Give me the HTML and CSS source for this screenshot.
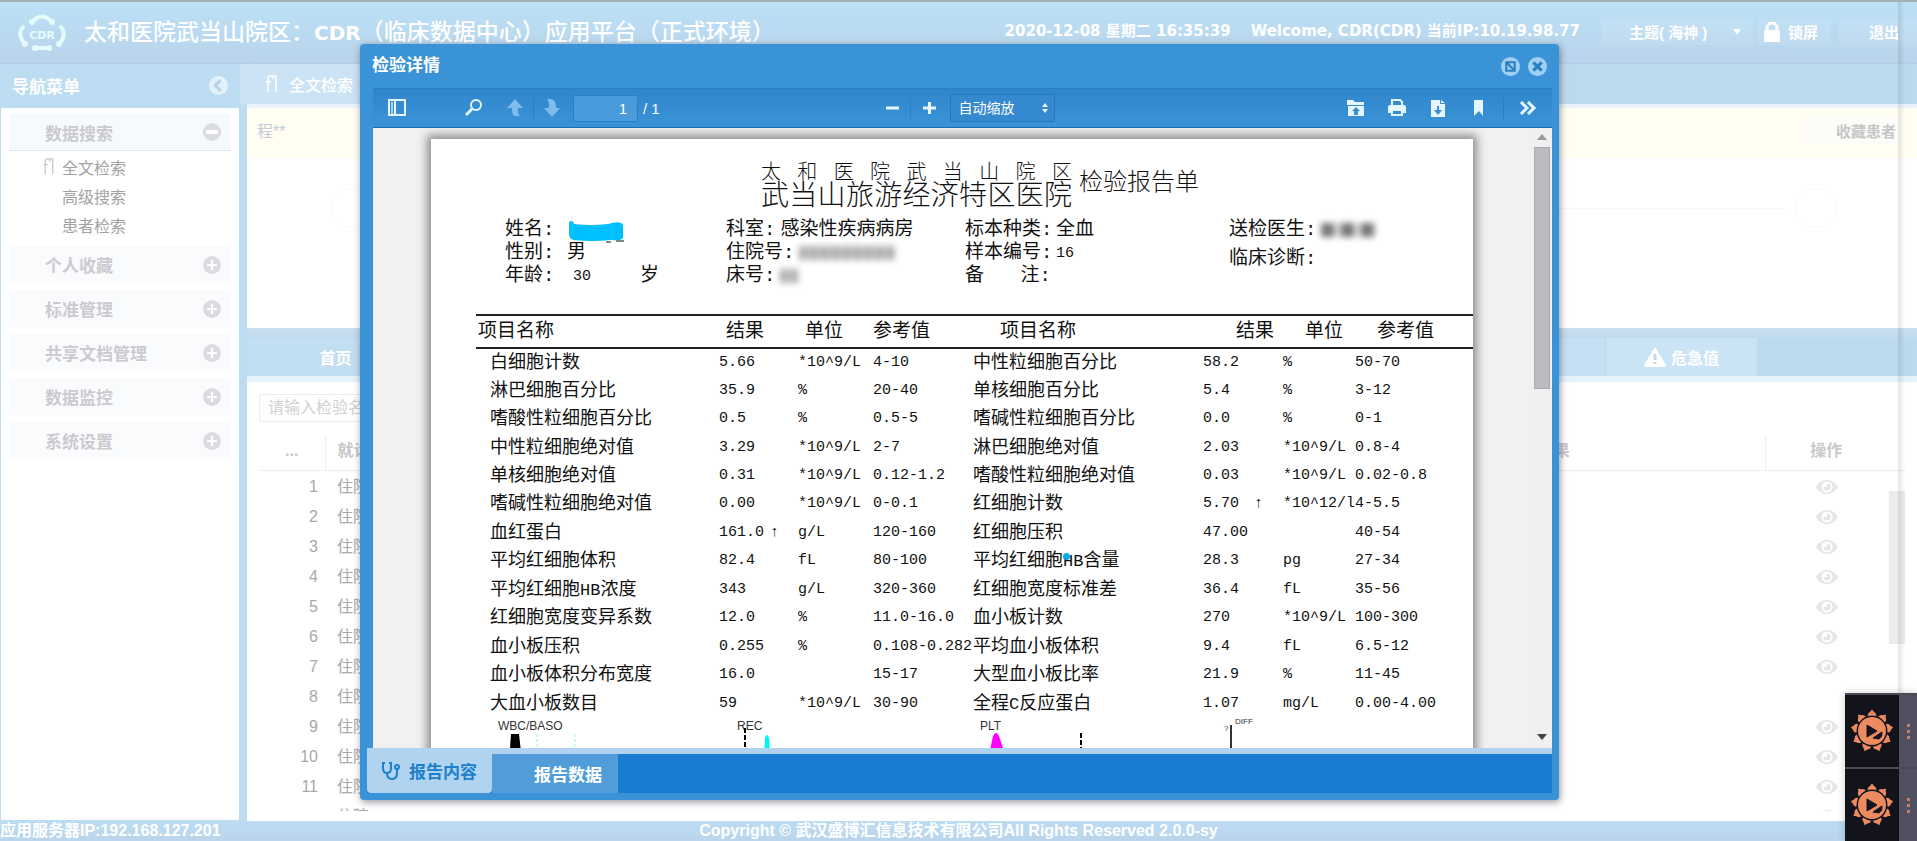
FILE: index.html
```html
<!DOCTYPE html>
<html lang="zh-CN">
<head>
<meta charset="utf-8">
<title>CDR 应用平台</title>
<link rel="stylesheet" href="styles.css">
</head>
<body>
<svg class="defs" aria-hidden="true">
  <symbol id="eye" viewBox="0 0 22 16"><path fill="currentColor" fill-rule="evenodd" d="M0 8C3 3 7 1 11 1s8 2 11 7c-3 5-7 7-11 7S3 13 0 8zm11-5.500a5.500 5.500 0 1 0 0 11 5.500 5.500 0 0 0 0-11z"/><path fill="currentColor" d="M11 4.500A3.500 3.500 0 1 1 7.500 8H11z"/></symbol>
  <symbol id="plus" viewBox="0 0 18 18"><circle cx="9" cy="9" r="9" fill="currentColor"/><path d="M9 4v10M4 9h10" stroke="#fff" stroke-width="2"/></symbol>
  <symbol id="minus" viewBox="0 0 18 18"><circle cx="9" cy="9" r="9" fill="currentColor"/><path d="M3 9h12" stroke="#fff" stroke-width="4"/></symbol>
  <symbol id="doc" viewBox="0 0 12 18"><path d="M3 17V5c0-2 1-4 3-4s2 1 2 3M1 7h5M6 1h5v16" fill="none" stroke="currentColor" stroke-width="1.500"/></symbol>
  <symbol id="flower" viewBox="0 0 44 44">
    <g fill="#ec8a60"><path id="petal" d="M17.500 7Q17.500 4 20 3l2-2.500L24 3q2.500 1 2.500 4-4.500-1-9 0z"/>
    <use href="#petal" transform="rotate(40 22 22)"/><use href="#petal" transform="rotate(80 22 22)"/><use href="#petal" transform="rotate(120 22 22)"/><use href="#petal" transform="rotate(160 22 22)"/><use href="#petal" transform="rotate(200 22 22)"/><use href="#petal" transform="rotate(240 22 22)"/><use href="#petal" transform="rotate(280 22 22)"/><use href="#petal" transform="rotate(320 22 22)"/>
    <circle cx="22" cy="22" r="14"/></g>
    <path d="M17 16l10 6-10 6zM23 29l9-6c0 3 0 5-3 7z" fill="#14141e" stroke="#14141e" stroke-linejoin="round"/>
  </symbol>
</svg>

<header class="top">
  <svg class="logo" viewBox="0 0 48 38"><g fill="none" stroke="#e4fbfb" stroke-width="4" stroke-linecap="round"><path d="M14 8Q24-3 34 8"/><path d="M5 13Q-1 20 6 29"/><path d="M43 13Q49 20 42 29"/><path d="M16 34h16"/></g><g fill="#e4fbfb"><circle cx="14" cy="8" r="3"/><circle cx="34" cy="8" r="3"/><circle cx="7" cy="30" r="3"/><circle cx="41" cy="30" r="3"/><circle cx="17" cy="34" r="3"/><circle cx="31" cy="34" r="3"/></g><text x="24" y="25" text-anchor="middle" class="logo-text">CDR</text></svg>
  <h1>太和医院武当山院区：<b>CDR</b>（临床数据中心）应用平台（正式环境）</h1>
  <div class="status"><span>2020-12-08 星期二 16:35:39</span><span>Welcome, CDR(CDR) 当前IP:10.19.98.77</span></div>
  <div class="actions">
    <button class="theme">主题( 海神 )<i class="caret"></i></button>
    <button class="lock"><svg viewBox="0 0 18 20"><path d="M4 9V6a5 5 0 0 1 10 0v3" fill="none" stroke="#fff" stroke-width="3"/><rect x="1" y="8" width="16" height="12" rx="1" fill="#fff"/></svg>锁屏</button>
    <button class="exit">退出</button>
  </div>
</header>

<div class="middle">
  <aside class="side">
    <h2>导航菜单<svg viewBox="0 0 18 18"><circle cx="9" cy="9" r="9" fill="#e2f1fa"/><path d="M11 4L6 9l5 5" fill="none" stroke="#b4d4ea" stroke-width="3"/></svg></h2>
    <nav class="menu">
      <button class="group open">数据搜索<svg><use href="#minus"/></svg></button>
      <ul>
        <li><svg><use href="#doc"/></svg><a href="#">全文检索</a></li>
        <li><a href="#">高级搜索</a></li>
        <li><a href="#">患者检索</a></li>
      </ul>
      <button class="group">个人收藏<svg><use href="#plus"/></svg></button>
      <button class="group">标准管理<svg><use href="#plus"/></svg></button>
      <button class="group">共享文档管理<svg><use href="#plus"/></svg></button>
      <button class="group">数据监控<svg><use href="#plus"/></svg></button>
      <button class="group">系统设置<svg><use href="#plus"/></svg></button>
    </nav>
  </aside>

  <main class="main">
    <div class="pagetabs"><button><svg><use href="#doc"/></svg>全文检索</button></div>
    <section class="content">
      <div class="patient"><span>程**</span><button>收藏患者</button></div>
      <div class="timeline"><i></i><hr><i></i></div>
      <div class="tabs"><button class="home">首页</button><span class="fill"></span><button class="alert"><svg viewBox="0 0 22 20"><path d="M11 0l11 18q0 2-2 2H2q-2 0-2-2z" fill="#fff"/><path d="M11 7v6M11 15v2" stroke="#c0dbef" stroke-width="3"/></svg>危急值</button><span class="rest"></span></div>
      <div class="list">
        <input class="filter" type="text" placeholder="请输入检验名称" aria-label="检验名称">
        <div class="gridwrap">
        <table class="grid">
          <colgroup><col class="c-no"><col><col class="c-result"><col class="c-op"></colgroup>
          <thead><tr><th class="dots">...</th><th class="left">就诊类型</th><th>检验结果</th><th>操作</th></tr></thead>
          <tbody>
            <tr><td>1</td><td>住院</td><td></td><td><svg><use href="#eye"/></svg></td></tr>
            <tr><td>2</td><td>住院</td><td></td><td><svg><use href="#eye"/></svg></td></tr>
            <tr><td>3</td><td>住院</td><td></td><td><svg><use href="#eye"/></svg></td></tr>
            <tr><td>4</td><td>住院</td><td></td><td><svg><use href="#eye"/></svg></td></tr>
            <tr><td>5</td><td>住院</td><td></td><td><svg><use href="#eye"/></svg></td></tr>
            <tr><td>6</td><td>住院</td><td></td><td><svg><use href="#eye"/></svg></td></tr>
            <tr><td>7</td><td>住院</td><td></td><td><svg><use href="#eye"/></svg></td></tr>
            <tr><td>8</td><td>住院</td><td></td><td></td></tr>
            <tr><td>9</td><td>住院</td><td></td><td><svg><use href="#eye"/></svg></td></tr>
            <tr><td>10</td><td>住院</td><td></td><td><svg><use href="#eye"/></svg></td></tr>
            <tr><td>11</td><td>住院</td><td></td><td><svg><use href="#eye"/></svg></td></tr>
            <tr><td></td><td>住院</td><td></td><td><svg><use href="#eye"/></svg></td></tr>
          </tbody>
        </table>
        <div class="gridbar"></div>
        </div>
      </div>
    </section>
  </main>
</div>

<footer class="foot"><span>应用服务器IP:192.168.127.201</span><span class="copy">Copyright © 武汉盛博汇信息技术有限公司All Rights Reserved 2.0.0-sy</span></footer>

<div class="edge"></div>

<section class="modal" role="dialog" aria-label="检验详情">
  <div class="modal-head"><h2>检验详情</h2>
    <button aria-label="最大化"><svg viewBox="0 0 18 18"><circle cx="9" cy="9" r="9" fill="#9fd0f2"/><path d="M5 10V5h8v8h-3M6 6l7 7M5 8v5h5" fill="none" stroke="#2b7fc2" stroke-width="2"/></svg></button>
    <button aria-label="关闭"><svg viewBox="0 0 18 18"><circle cx="9" cy="9" r="9" fill="#9fd0f2"/><path d="M5 5l8 8M13 5l-8 8" stroke="#2b7fc2" stroke-width="3"/></svg></button>
  </div>
  <div class="viewer">
    <div class="toolbar">
      <div class="tools">
        <button class="t-side" aria-label="侧栏"><svg viewBox="0 0 18 18"><path d="M1 1h16v15H1zM7 1v15" fill="none" stroke="#e6f6fe" stroke-width="2"/><path d="M4 3v12" stroke="#a9d4f3" stroke-width="2"/></svg></button>
        <button class="t-find" aria-label="查找"><svg viewBox="0 0 18 18"><circle cx="11" cy="6" r="5" fill="none" stroke="#e6f6fe" stroke-width="2"/><path d="M7 10l-6 6" stroke="#e6f6fe" stroke-width="3"/></svg></button>
        <button class="t-up" aria-label="上一页"><svg viewBox="0 0 18 18"><path d="M9 0l8 9h-5c0 4 0 6 2 8H9c-3-1-3-5-3-8H1z" fill="#7dbcec"/></svg></button>
        <i class="sep"></i>
        <button class="t-down" aria-label="下一页"><svg viewBox="0 0 18 18"><path d="M9 18l8-9h-4c0-5-1-8-5-9H4c2 2 2 5 2 9H1z" fill="#7dbcec"/></svg></button>
        <input class="pageno" type="text" value="1" aria-label="页码"><span>/ 1</span>
      </div>
      <div class="tools zoom">
        <button aria-label="缩小"><svg viewBox="0 0 18 18"><path d="M3 9h13" stroke="#e6f6fe" stroke-width="3"/></svg></button>
        <i class="sep"></i>
        <button aria-label="放大"><svg viewBox="0 0 18 18"><path d="M3 9h13M9.500 3v12" stroke="#e6f6fe" stroke-width="3"/></svg></button>
        <label class="scale"><select aria-label="缩放"><option>自动缩放</option></select><svg viewBox="0 0 8 12"><path d="M1 5l3-4 3 4zM1 7l3 4 3-4z" fill="#e6f6fe"/></svg></label>
      </div>
      <div class="tools end">
        <button aria-label="打开"><svg viewBox="0 0 18 18"><path fill-rule="evenodd" d="M0 1h6l2 2h9v3H0zM1 7h16v10H1zm8 1L5 12h2v4h4v-4h2z" fill="#e6f6fe"/></svg></button>
        <button aria-label="打印"><svg viewBox="0 0 18 18"><path d="M4 7V1h8l2 2v4" fill="none" stroke="#e6f6fe" stroke-width="2"/><path fill-rule="evenodd" d="M0 8q0-2 2-2h14q2 0 2 2v6h-3v3H3v-3H0zm5 4v3h8v-3z" fill="#e6f6fe"/></svg></button>
        <button aria-label="下载"><svg viewBox="0 0 18 18"><path fill-rule="evenodd" d="M2 1h9v4h5v13H2zm10 0l4 3h-4zM8 7v4H5l4 5 4-5h-3V7z" fill="#e6f6fe"/></svg></button>
        <button aria-label="书签"><svg viewBox="0 0 18 18"><path d="M4 1h9v16l-4-5-5 5z" fill="#e6f6fe"/></svg></button>
        <i class="sep"></i>
        <button aria-label="工具"><svg viewBox="0 0 18 18"><path d="M2 3l6 6-6 6M9 3l6 6-6 6" fill="none" stroke="#e6f6fe" stroke-width="3"/></svg></button>
      </div>
    </div>
    <div class="canvas">
      <article class="paper">
        <div class="title"><div class="names"><p class="spread">太 和 医 院 武 当 山 院 区</p><p class="second">武当山旅游经济特区医院</p></div><p class="kind">检验报告单</p></div>
        <div class="info">
          <dl class="i1"><div><dt>姓名:</dt><dd><svg class="scribble" viewBox="0 0 58 24"><path d="M2 3Q6 0 7 5q17 2 34 0 13-4 15 1v13q-2 3-12 2-20 2-37 0-5-1-5-6z" fill="#00bfff"/><path d="M39 23h5M49 22h8" stroke="#111"/></svg></dd></div><div><dt>性别:</dt><dd>男</dd></div><div><dt>年龄:</dt><dd class="age"><span class="num">30</span><span>岁</span></dd></div></dl>
          <dl class="i2"><div><dt>科室:</dt><dd>感染性疾病病房</dd></div><div><dt>住院号:</dt><dd><i class="mask long"></i></dd></div><div><dt>床号:</dt><dd><i class="mask short"></i></dd></div></dl>
          <dl class="i3"><div><dt>标本种类:</dt><dd>全血</dd></div><div><dt>样本编号:</dt><dd class="num">16</dd></div><div><dt class="note"><span>备</span><span>注:</span></dt><dd></dd></div></dl>
          <dl class="i4"><div><dt>送检医生:</dt><dd><i class="mask doctor"></i></dd></div><div><dt>临床诊断:</dt><dd></dd></div></dl>
        </div>
        <table class="report">
          <colgroup><col class="n1"><col class="r1"><col class="u1"><col class="f1"><col class="n2"><col class="r2"><col class="u2"><col></colgroup>
          <thead><tr><th>项目名称</th><th>结果</th><th>单位</th><th>参考值</th><th>项目名称</th><th>结果</th><th>单位</th><th>参考值</th></tr></thead>
          <tbody>
            <tr><td>白细胞计数</td><td>5.66</td><td>*10^9/L</td><td>4-10</td><td>中性粒细胞百分比</td><td>58.2</td><td>%</td><td>50-70</td></tr>
            <tr><td>淋巴细胞百分比</td><td>35.9</td><td>%</td><td>20-40</td><td>单核细胞百分比</td><td>5.4</td><td>%</td><td>3-12</td></tr>
            <tr><td>嗜酸性粒细胞百分比</td><td>0.5</td><td>%</td><td>0.5-5</td><td>嗜碱性粒细胞百分比</td><td>0.0</td><td>%</td><td>0-1</td></tr>
            <tr><td>中性粒细胞绝对值</td><td>3.29</td><td>*10^9/L</td><td>2-7</td><td>淋巴细胞绝对值</td><td>2.03</td><td>*10^9/L</td><td>0.8-4</td></tr>
            <tr><td>单核细胞绝对值</td><td>0.31</td><td>*10^9/L</td><td>0.12-1.2</td><td>嗜酸性粒细胞绝对值</td><td>0.03</td><td>*10^9/L</td><td>0.02-0.8</td></tr>
            <tr><td>嗜碱性粒细胞绝对值</td><td>0.00</td><td>*10^9/L</td><td>0-0.1</td><td>红细胞计数</td><td><span class="val">5.70</span>↑</td><td>*10^12/l</td><td>4-5.5</td></tr>
            <tr><td>血红蛋白</td><td><span class="val">161.0</span>↑</td><td>g/L</td><td>120-160</td><td>红细胞压积</td><td>47.00</td><td></td><td>40-54</td></tr>
            <tr><td>平均红细胞体积</td><td>82.4</td><td>fL</td><td>80-100</td><td>平均红细胞<span class="hb mark">HB</span>含量</td><td>28.3</td><td>pg</td><td>27-34</td></tr>
            <tr><td>平均红细胞<span class="hb">HB</span>浓度</td><td>343</td><td>g/L</td><td>320-360</td><td>红细胞宽度标准差</td><td>36.4</td><td>fL</td><td>35-56</td></tr>
            <tr><td>红细胞宽度变异系数</td><td>12.0</td><td>%</td><td>11.0-16.0</td><td>血小板计数</td><td>270</td><td>*10^9/L</td><td>100-300</td></tr>
            <tr><td>血小板压积</td><td>0.255</td><td>%</td><td>0.108-0.282</td><td>平均血小板体积</td><td>9.4</td><td>fL</td><td>6.5-12</td></tr>
            <tr><td>血小板体积分布宽度</td><td>16.0</td><td></td><td>15-17</td><td>大型血小板比率</td><td>21.9</td><td>%</td><td>11-45</td></tr>
            <tr><td>大血小板数目</td><td>59</td><td>*10^9/L</td><td>30-90</td><td>全程<span class="hb">C</span>反应蛋白</td><td>1.07</td><td>mg/L</td><td>0.00-4.00</td></tr>
          </tbody>
        </table>
        <svg class="charts" width="860" height="60">
          <g class="chart-label"><text x="22" y="12">WBC/BASO</text><text x="261" y="12">REC</text><text x="504" y="12">PLT</text></g>
          <text class="chart-tiny" x="759" y="6">DIFF</text><text class="chart-tiny" x="748" y="13">?</text>
          <path d="M32 60l3-44h8l5 44z" fill="#000"/><path d="M61 16v44M99 16v44" stroke="#9df0ee" stroke-dasharray="3 2"/>
          <path d="M269 10v50M605 15v45" stroke="#000" stroke-width="2" stroke-dasharray="5 2"/>
          <path d="M287 60l2-40q2-6 4 0l3 40z" fill="#00f6f6"/><path d="M508 60l9-42q3-6 6 0l14 42z" fill="#f0f"/>
          <path d="M755 7v53" stroke="#333" stroke-width="2"/><ellipse cx="776" cy="34" rx="6" ry="4" fill="#7be07b"/><ellipse cx="798" cy="34" rx="7" ry="4" fill="#ee7a88"/>
        </svg>
      </article>
      <div class="scrollbar"><i class="up"></i><i class="thumb"></i><i class="down"></i></div>
    </div>
  </div>
  <div class="modal-tabs">
    <button class="active"><svg viewBox="0 0 20 20"><path d="M4 2H2v5q0 5 4 5t4-5V2H8M6 12q0 6 5 6t5-6V8" fill="none" stroke="#1c80cc" stroke-width="2"/><circle cx="16" cy="6" r="2" fill="none" stroke="#1c80cc" stroke-width="2"/></svg>报告内容</button>
    <button>报告数据</button>
  </div>
</section>

<div class="dock">
  <div><span class="pic"><svg><use href="#flower"/></svg></span><span class="more"><i></i><i></i><i></i></span></div>
  <div><span class="pic"><svg><use href="#flower"/></svg></span><span class="more"><i></i><i></i><i></i></span></div>
</div>
</body>
</html>
```

FILE: styles.css
```css
* { box-sizing: border-box; }
body { margin: 0; height: 100vh; display: flex; flex-direction: column; overflow: hidden; position: relative; background: #bcdcf2; font-family: "Liberation Sans", "Noto Sans CJK SC", sans-serif; font-size: 16px; color: #aaa; }
button { font: inherit; color: inherit; border: 0; background: none; padding: 0; white-space: nowrap; }
h1, h2, p, ul, dl, dd { margin: 0; padding: 0; }
i { font-style: normal; }
.defs { position: absolute; width: 0; height: 0; }

/* page header */
.top { height: 64px; flex: none; display: flex; align-items: center; padding: 0 0 10px 18px; border-top: 2px solid #a9b0b4; border-bottom: 1px solid #b0cee5; background: linear-gradient(#bbe1f7, #b9d3ea); color: #fff; white-space: nowrap; overflow: hidden; }
.logo { width: 48px; height: 38px; margin-top: 10px; flex: none; }
.logo-text { font: bold 11px "DejaVu Sans", sans-serif; fill: #e4fbfb; }
.top h1 { margin: 8px 0 0 18px; font-size: 23px; font-weight: 500; line-height: 30px; }
.top h1 b { font: bold 20px "DejaVu Sans", sans-serif; }
.status { margin: 6px 21px 0 auto; display: flex; gap: 20px; font: bold 15px "DejaVu Sans", "Noto Sans CJK SC", sans-serif; line-height: 24px; }
.actions { margin-top: 8px; display: flex; gap: 4px; flex: none; font-size: 15px; font-weight: bold; }
.actions button { height: 26px; display: flex; align-items: center; background: rgba(255,255,255,.1); }
.actions .theme { width: 152px; padding: 0 12px 0 28px; justify-content: space-between; }
.caret { border: 4px solid transparent; border-top: 6px solid #fff; border-bottom: 0; }
.actions .lock { width: 74px; gap: 7px; padding-left: 6px; }
.lock svg { width: 18px; height: 20px; }
.actions .exit { width: 78px; padding-left: 30px; margin-left: 4px; }

/* navigation */
.middle { flex: 1; min-height: 0; display: flex; }
.side { width: 240px; flex: none; display: flex; flex-direction: column; padding: 0 1px 1px; }
.side h2 { height: 44px; flex: none; display: flex; align-items: center; justify-content: space-between; padding: 0 11px 2px; font-size: 17px; color: #fff; }
.side h2 svg { width: 19px; height: 19px; }
.menu { flex: 1; background: #fff; padding: 6px 8px; display: flex; flex-direction: column; gap: 7px; }
.group { height: 37px; flex: none; display: flex; align-items: center; justify-content: space-between; padding: 0 10px 0 36px; background: #fafbfd; font-size: 17px; font-weight: bold; color: #cbcbcf; }
.group.open { border-bottom: 1px solid #dde8f1; background: #f7fafd; }
.group svg { width: 18px; height: 18px; color: #dcdce0; }
.menu ul { list-style: none; margin: -6px 0 0; height: 87px; }
.menu li { height: 29px; display: flex; align-items: center; padding-left: 53px; position: relative; }
.menu li svg { position: absolute; left: 33px; top: 6px; width: 12px; height: 17px; color: #ccc; }
.menu a { color: #a2a2a2; text-decoration: none; }

/* main area */
.main { flex: 1; min-width: 0; display: flex; flex-direction: column; }
.pagetabs { height: 40px; flex: none; background: #bcdaee; }
.pagetabs button { width: 170px; height: 40px; display: flex; align-items: center; gap: 12px; padding-left: 25px; background: #cce3f5; color: #fff; font-size: 16px; font-weight: 500; }
.pagetabs svg { width: 12px; height: 18px; }
.content { flex: 1; min-height: 0; margin-left: 7px; background: #fff; border-top: 4px solid #eaf2fc; display: flex; flex-direction: column; }
.patient { height: 50px; flex: none; display: flex; justify-content: space-between; align-items: center; padding: 0 17px 6px 10px; background: #fffef0; color: #c4cbe0; }
.patient button { width: 98px; height: 28px; padding-right: 4px; background: #fcfcf9; font-size: 15px; font-weight: bold; color: #c6c6c6; text-align: right; }
.timeline { height: 170px; flex: none; display: flex; align-items: center; gap: 10px; padding: 0 81px 70px 84px; }
.timeline i { width: 40px; height: 40px; border: 1px solid #f9f9fb; border-radius: 50%; }
.timeline hr { flex: 1; border: 0; border-top: 1px dotted #eee; }
.tabs { height: 54px; flex: none; display: flex; align-items: stretch; padding-top: 10px; background: linear-gradient(#cbdeed, #bcdaee 12px); border-bottom: 6px solid #e3f2fb; color: #fff; font-size: 16px; font-weight: bold; }
.tabs .home { width: 176px; padding-left: 1px; background: #c2def1; }
.tabs .fill { flex: 1; background: #c5e0f3; }
.tabs .alert { width: 151px; margin-left: 1px; background: #cbe4f5; display: flex; align-items: center; justify-content: center; gap: 5px; }
.alert svg { width: 22px; height: 20px; }
.tabs .rest { width: 160px; }
.list { flex: 1; min-height: 0; padding: 12px 12px 10px; display: flex; flex-direction: column; gap: 14px; }
.filter { width: 220px; height: 28px; padding: 0 8px; border: 1px solid #eee; font: inherit; }
.filter::placeholder { color: #d0d0d0; }
.gridwrap { position: relative; flex: 1; min-height: 0; overflow: hidden; }
.grid { width: 100%; border-collapse: collapse; table-layout: fixed; }
.c-no { width: 66px; } .c-result { width: 454px; } .c-op { width: 140px; }
.grid th { height: 34px; padding: 0 0 4px; font-size: 16px; line-height: 20px; color: #c8c8c8; border-bottom: 1px solid #eee; border-right: 1px solid #eee; }
.grid th:last-child { border-right: 0; padding-right: 18px; }
.grid th.left { text-align: left; padding-left: 12px; }
.grid th:nth-child(2) { border-right: 0; }
.grid td { height: 30px; padding: 3px 0 0 12px; line-height: 20px; color: #a8a8a8; }
.grid td:first-child { text-align: right; padding: 3px 7px 0 0; }
.grid td:last-child { text-align: center; padding: 3px 16px 0 0; }
.grid td svg { display: block; width: 22px; height: 16px; margin: 0 auto; color: #e6e6e8; }
.gridbar { position: absolute; right: 0; top: 55px; width: 16px; height: 153px; background: #ececee; }
.foot { height: 20px; flex: none; position: relative; background: linear-gradient(#bcdcf4, #bad5eb); color: #fff; font-size: 16px; font-weight: bold; line-height: 20px; white-space: nowrap; }
.copy { position: absolute; left: 0; right: 0; text-align: center; }
.edge { position: absolute; top: 2px; bottom: 0; right: 12px; width: 7px; background: linear-gradient(90deg, rgba(0,0,0,.1), transparent); }

/* dialog */
.modal { position: absolute; inset: 44px 358px 41px 360px; display: flex; flex-direction: column; padding: 0 7px 7px; border-radius: 4px; background: #3a92d7; box-shadow: 1px 2px 7px rgba(40,40,60,.5); color: #fff; }
.modal-head { height: 44px; flex: none; display: flex; align-items: center; gap: 8px; padding: 0 5px; }
.modal-head h2 { margin-right: auto; font-size: 17px; line-height: 24px; }
.modal-head button, .modal-head svg { display: block; width: 19px; height: 19px; }
.viewer { flex: 1; min-height: 0; display: flex; flex-direction: column; margin: 0 0 0 6px; }
.toolbar { height: 40px; flex: none; display: grid; grid-template-columns: 1fr auto 1fr; align-items: center; border-top: 1px solid #2b80c4; border-bottom: 1px solid #1a6cb4; background: linear-gradient(#3186cb, #3a93d8); font-size: 15px; }
.tools { display: flex; align-items: center; }
.tools button, .tools button svg { display: block; width: 18px; height: 18px; }
.t-side { margin-left: 15px; } .t-find { margin-left: 59px; } .t-up { margin-left: 23px; }
.sep { width: 1px; height: 22px; margin: 0 9px; background: #2b80c4; }
.pageno { width: 65px; height: 27px; margin: 0 5px 0 12px; padding: 0 10px; border: 1px solid #2c7fc1; border-radius: 2px; background: #4a9bdb; color: #fff; font: inherit; text-align: right; }
.zoom { padding-left: 12px; }
.scale { position: relative; display: block; margin-left: 12px; }
.scale select { appearance: none; width: 105px; height: 28px; padding: 0 8px; border: 1px solid #2877bd; border-radius: 2px; background: #3489cf; color: #fff; font: inherit; font-size: 14px; }
.scale svg { position: absolute; right: 6px; top: 8px; width: 8px; height: 12px; }
.tools.end { justify-content: flex-end; gap: 23px; padding-right: 15px; }
.end .sep { margin: 0 -8px; }
.canvas { flex: 1; min-height: 0; overflow: hidden; display: flex; justify-content: space-between; padding-left: 58px; background: #f1f1f2; }
.paper { flex: 1; min-height: 640px; margin: 11px 60px 0 0; background: #fff; box-shadow: 0 0 9px 4px #8f8b91; color: #111; font-family: "Liberation Mono", "Noto Sans CJK SC", monospace; overflow: hidden; }
.title { display: flex; align-items: center; justify-content: center; gap: 7px; padding: 21px 0 0 56px; font-weight: 300; }
.names { width: 311px; }
.names p { text-align: justify; text-align-last: justify; white-space: nowrap; }
.spread { font: 300 20px/22px "Noto Sans CJK SC", sans-serif; }
.names .second { font-size: 28px; line-height: 32px; }
.kind { padding-bottom: 6px; font-size: 24px; line-height: 30px; }
.info { display: grid; grid-template-columns: 221px 239px 264px 1fr; margin: 5px 0 0 74px; height: 95px; font-size: 19px; line-height: 23px; }
.info dl { display: flex; flex-direction: column; }
.info dl div { display: flex; height: 23px; gap: 5px; }
.info .i1 dt { width: 62px; }
.info .i1 div { gap: 0; }
.info .i3 dt { width: 86px; }
.info dt, .info dd { white-space: nowrap; }
.num, .report td:not(:nth-child(4n+1)) { font-size: 15px; }
.scribble { display: block; width: 58px; height: 24px; }
.info .age { display: flex; justify-content: space-between; width: 92px; padding-left: 6px; }
.info .note { display: flex; justify-content: space-between; }
.info .i4 { gap: 6px; }
.mask { display: block; height: 14px; margin-top: 4px; filter: blur(3px); background: repeating-linear-gradient(90deg, #aaa 0 7px, #ccc 7px 11px); }
.mask.long { width: 96px; } .mask.short { width: 18px; }
.mask.doctor { width: 54px; background: repeating-linear-gradient(90deg, #777 0 13px, #ddd 13px 20px); }
.report { width: calc(100% - 45px); height: 404px; margin-left: 45px; border-collapse: collapse; table-layout: fixed; }
.report .n1 { width: 243px; } .report .r1 { width: 79px; } .report .u1 { width: 75px; } .report .f1 { width: 100px; }
.report .n2 { width: 230px; } .report .r2 { width: 80px; } .report .u2 { width: 72px; }
.report th { height: 33px; padding: 0; border-top: 2px solid #222; border-bottom: 2px solid #222; font-size: 19px; font-weight: 400; line-height: 24px; text-align: left; white-space: nowrap; }
.report th:nth-child(1) { padding-left: 2px; }
.report th:nth-child(2), .report th:nth-child(3) { padding-left: 7px; }
.report th:nth-child(5) { padding-left: 27px; } .report th:nth-child(6) { padding-left: 33px; }
.report th:nth-child(7), .report th:nth-child(8) { padding-left: 22px; }
.report td { height: 28px; padding: 0; font-size: 18px; line-height: 24px; white-space: nowrap; }
.report td:first-child { padding-left: 14px; }
.val { display: inline-block; width: 51px; }
.hb { font-size: 17px; line-height: 1; }
.mark { position: relative; }
.mark::after { content: ""; position: absolute; left: 0; top: 1px; width: 7px; height: 7px; border-radius: 50%; background: #00aef0; }
.charts { display: block; margin-left: 45px; }
.chart-label { font: 12px "Liberation Sans", sans-serif; fill: #333; }
.chart-tiny { font: 8px "Liberation Sans", sans-serif; fill: #333; }
.scrollbar { width: 19px; flex: none; display: flex; flex-direction: column; align-items: center; background: #f0f0f2; padding: 6px 2px 8px 0; }
.up { border: 5px solid transparent; border-bottom: 6px solid #9a9a9c; border-top: 0; }
.thumb { width: 16px; height: 242px; margin: 7px 0 auto; background: #bdbbbf; border: 1px solid #aaa8ac; }
.down { border: 5px solid transparent; border-top: 6px solid #444; border-bottom: 0; }
.modal-tabs { height: 45px; flex: none; display: flex; border-top: 6px solid #b0d2ee; background: #187dd0; font-size: 17px; font-weight: bold; }
.modal-tabs button { width: 126px; padding-left: 42px; background: #509dda; text-align: left; }
.modal-tabs .active { width: 125px; display: flex; align-items: center; gap: 8px; padding: 0 0 0 14px; margin-top: -6px; border-radius: 0 0 4px 4px; background: #b0d3f0; color: #1c80cc; }
.active svg { width: 20px; height: 20px; }

/* floating recorder */
.dock { position: absolute; right: 0; bottom: 0; width: 72px; box-shadow: 0 0 8px rgba(0,0,0,.2); }
.dock > div { display: flex; height: 74px; border-top: 2px solid #4b4b55; }
.pic { width: 54px; display: grid; place-items: center; background: #13131c; }
.pic svg { width: 44px; height: 44px; }
.more { flex: 1; display: flex; flex-direction: column; align-items: center; justify-content: center; gap: 3px; background: #505060; }
.more i { width: 3px; height: 3px; background: #c87f66; }
```
